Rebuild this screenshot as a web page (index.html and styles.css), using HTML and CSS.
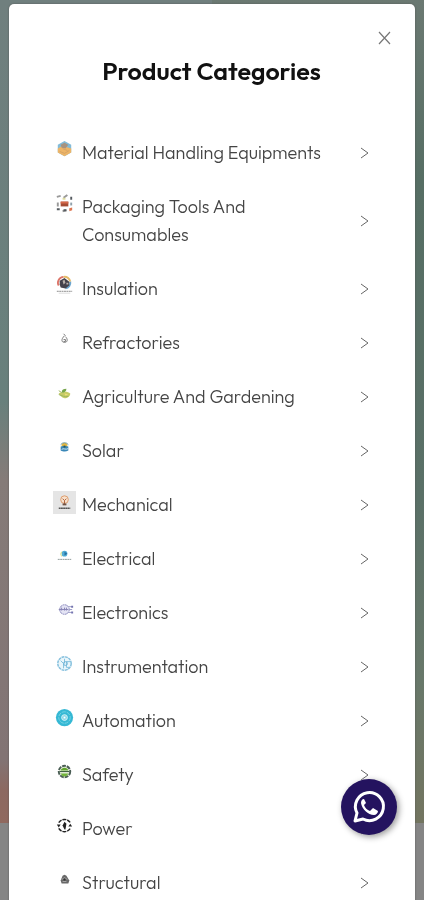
FILE: index.html
```html
<!DOCTYPE html>
<html lang="en">
<head>
    <meta charset="UTF-8">
    <meta name="viewport" content="width=device-width, initial-scale=1.0">
    <title>Product Categories</title>
    <link rel="stylesheet" href="styles.css">
</head>
<body>

<!-- page banner behind the modal -->
<div class="backdrop"></div>

<svg width="0" height="0" class="symbols" aria-hidden="true">
    <symbol id="chevron" viewBox="0 0 10 14">
        <path d="M1 2l7 5-7 5" fill="none" stroke="#666" stroke-width="1"/>
    </symbol>
</svg>

<main class="modal">
    <div class="modal-top">
        <button type="button" class="close" aria-label="Close">
            <svg width="14" height="14" viewBox="0 0 14 14"><path d="M1 1l11 12M12 1L1 13" fill="none" stroke="#777" stroke-width="1.2"/></svg>
        </button>
    </div>
    <h1>Product Categories</h1>

    <nav class="categories">
        <a href="#material-handling">
            <svg class="icon" viewBox="0 0 24 24">
                <path d="M12 2l7 4v8l-7 4-7-4V6z" fill="#82bbd8"/>
                <path d="M5 10l5-3 9 3v4l-7 4-7-4z" fill="#edb568"/>
                <path d="M8 6l4-2 4 2-3 4-4-1z" fill="#a69380"/>
                <path d="M7 13l5 2 5-3M10 10l5 2" fill="none" stroke="#d5a264"/>
            </svg>
            <span class="label">Material Handling Equipments</span>
            <svg class="chevron"><use href="#chevron"/></svg>
        </a>
        <a href="#packaging">
            <svg class="icon" viewBox="0 0 24 24">
                <path d="M8 9h8v5H8z" fill="#a64c34"/>
                <path d="M8 9h8v2H8z" fill="#d6674a"/>
                <path d="M4 4l4-1M11 5l4-3M5 10v4M10 19l4-1" fill="none" stroke="#999" stroke-width="2"/>
                <path d="M18 4h2v3h-2zM4 16h3v2H4zM11 17h3v2h-3z" fill="#555b60"/>
                <path d="M18 10h2v3h-2z" fill="#8fa0ab"/>
                <path d="M17 16l3-1v3l-3 1z" fill="#db744f"/>
                <path d="M10 5h3v2h-3z" fill="#dedb9d"/>
            </svg>
            <span class="label">Packaging Tools And Consumables</span>
            <svg class="chevron"><use href="#chevron"/></svg>
        </a>
        <a href="#insulation">
            <svg class="icon" viewBox="0 0 24 24">
                <path d="M6 11a6 6 0 0 1 5-9" fill="none" stroke="#dd7569" stroke-width="2"/>
                <path d="M11 2a6 6 0 0 1 7 5" fill="none" stroke="#e5bb68" stroke-width="2"/>
                <path d="M18 7a6 6 0 0 1-5 7" fill="none" stroke="#6ca6cf" stroke-width="2"/>
                <path d="M7 6l5-3 5 4v4l-4 3-5-1-1-3z" fill="#45424c"/>
                <path d="M10 6l2-1 1 3-2 2zM14 8h2v2h-2z" fill="#b9b1ac"/>
                <path d="M4 17h16" stroke="#888" stroke-dasharray="2 .5"/>
                <path d="M6 19h12" stroke="#ddd"/>
            </svg>
            <span class="label">Insulation</span>
            <svg class="chevron"><use href="#chevron"/></svg>
        </a>
        <a href="#refractories">
            <svg class="icon" viewBox="0 0 24 24">
                <path d="M11 5l2 2M12 7c-4 4-3 7 0 7s4-3 1-6M11 11h2v2h-2" fill="none" stroke="#777"/>
            </svg>
            <span class="label">Refractories</span>
            <svg class="chevron"><use href="#chevron"/></svg>
        </a>
        <a href="#agriculture">
            <svg class="icon" viewBox="0 0 24 24">
                <path d="M6 11c3-2 9-3 12 0 0 3-3 5-6 5-3-1-5-3-6-5z" fill="#c6cb67"/>
                <path d="M9 10c0-3 2-4 5-4 0 3-2 4-5 4z" fill="#76a54b"/>
                <path d="M6 8l3 2M6 12c3 1 6 3 10 2" fill="none" stroke="#9db55f"/>
                <path d="M12 11l4 1-3 1z" fill="#f0df79"/>
            </svg>
            <span class="label">Agriculture And Gardening</span>
            <svg class="chevron"><use href="#chevron"/></svg>
        </a>
        <a href="#solar">
            <svg class="icon" viewBox="0 0 24 24">
                <circle cx="12" cy="9" r="3" fill="#e5b73f"/>
                <path d="M8 8a5 5 0 0 1 8 0" fill="none" stroke="#6694a0"/>
                <path d="M8 10l4-1 4 1v4c-3 2-6 1-8 0z" fill="#3987b7"/>
                <path d="M9 13c2-2 4 1 7-1" fill="none" stroke="#d5e6ed"/>
                <path d="M11 9h2v2h-2z" fill="#315a50"/>
            </svg>
            <span class="label">Solar</span>
            <svg class="chevron"><use href="#chevron"/></svg>
        </a>
        <a href="#mechanical">
            <svg class="icon" viewBox="0 0 24 24">
                <path d="M0 0h24v24H0z" fill="#e5e5e5"/>
                <circle cx="12" cy="9" r="4" fill="#f7e1cd" stroke="#dc9b6b"/>
                <path d="M10 8l2 2 2-2M12 10v4" fill="none" stroke="#aa603b"/>
                <path d="M10 13h4v2h-4z" fill="#705447"/>
                <path d="M6 18h12" stroke="#555" stroke-width="1.5" stroke-dasharray="2 .3"/>
            </svg>
            <span class="label">Mechanical</span>
            <svg class="chevron"><use href="#chevron"/></svg>
        </a>
        <a href="#electrical">
            <svg class="icon" viewBox="0 0 24 24">
                <circle cx="12" cy="9" r="3" fill="#51acd4"/>
                <path d="M9 7a4 4 0 0 0 0 5" fill="none" stroke="#d9df7c"/>
                <path d="M12 7l3 2-3 2z" fill="#246da0"/>
                <path d="M5 15h14" stroke="#8d9999" stroke-dasharray="2 .5"/>
            </svg>
            <span class="label">Electrical</span>
            <svg class="chevron"><use href="#chevron"/></svg>
        </a>
        <a href="#electronics">
            <svg class="icon" viewBox="0 0 24 24">
                <circle cx="12" cy="11" r="5" fill="#e4e4f4" stroke="#8483b9" stroke-dasharray="2 .6"/>
                <path d="M6 11h10M9 9v3M12 9v3M14 9v3" fill="none" stroke="#8581b3"/>
                <path d="M16 8h4M17 11h3M16 14h4" stroke="#9a9ac3"/>
                <path d="M19 7h2v2h-2zM19 13h2v2h-2z" fill="#7474b0"/>
            </svg>
            <span class="label">Electronics</span>
            <svg class="chevron"><use href="#chevron"/></svg>
        </a>
        <a href="#instrumentation">
            <svg class="icon" viewBox="0 0 24 24">
                <circle cx="12" cy="11" r="7" fill="#eaf6fb" stroke="#83bfdd" stroke-width="1.5" stroke-dasharray="3 .7"/>
                <path d="M8 8l3 3v5M12 6v5M14 9h4M14 9v6h3" fill="none" stroke="#83bfdd"/>
                <circle cx="13" cy="11" r="2" fill="none" stroke="#70b4d6"/>
            </svg>
            <span class="label">Instrumentation</span>
            <svg class="chevron"><use href="#chevron"/></svg>
        </a>
        <a href="#automation">
            <svg class="icon" viewBox="0 0 24 24">
                <circle cx="12" cy="11" r="9" fill="#35b8d4"/>
                <circle cx="12" cy="11" r="6" fill="none" stroke="#75d3e4" stroke-dasharray="4 1"/>
                <circle cx="12" cy="11" r="3" fill="#83d4e5" stroke="#d6f4f8"/>
                <path d="M11 10h2v2h-2z" fill="#fff"/>
            </svg>
            <span class="label">Automation</span>
            <svg class="chevron"><use href="#chevron"/></svg>
        </a>
        <a href="#safety">
            <svg class="icon" viewBox="0 0 24 24">
                <circle cx="12" cy="11" r="6" fill="#e5edda" stroke="#4b5e55" stroke-width="2" stroke-dasharray="4 1"/>
                <path d="M8 10c1-4 7-4 8 0z" fill="#61a52b"/>
                <path d="M7 11h10" stroke="#345534"/>
                <path d="M8 13h8l-2 3h-4z" fill="#72b33a"/>
            </svg>
            <span class="label">Safety</span>
            <svg class="chevron"><use href="#chevron"/></svg>
        </a>
        <a href="#power">
            <svg class="icon" viewBox="0 0 24 24">
                <path d="M6 8a7 7 0 0 1 12 0M6 14a7 7 0 0 0 12 0" fill="none" stroke="#222" stroke-width="1.5" stroke-dasharray="4 1"/>
                <path d="M4 10h4l-2 3zM16 12h4l-2-3z" fill="#222"/>
                <path d="M12 7l2 2-1 6h-1l-2-4z" fill="#222"/>
            </svg>
            <span class="label">Power</span>
            <svg class="chevron"><use href="#chevron"/></svg>
        </a>
        <a href="#structural">
            <svg class="icon" viewBox="0 0 24 24">
                <path d="M10 7l2-1 2 1 3 5-1 3H9l-1-3z" fill="#686868"/>
                <path d="M9 11l3-2 3 2M10 13h4" fill="none" stroke="#aaa"/>
                <path d="M11 10h2v2h-2z" fill="#333"/>
            </svg>
            <span class="label">Structural</span>
            <svg class="chevron"><use href="#chevron"/></svg>
        </a>
    </nav>
</main>

<a class="whatsapp" href="#whatsapp" aria-label="Chat on WhatsApp">
    <svg width="34" height="34" viewBox="0 0 34 34">
        <path d="M3 31l2-8a14 14 0 1 1 6 6z" fill="none" stroke="#fff" stroke-width="3" stroke-linejoin="round"/>
        <path d="M12 9c-2 0-3 2-3 4 1 6 7 12 13 12 2 0 4-2 4-4l-5-3-3 3c-3-1-5-3-6-6l2-2-2-4z" fill="#fff"/>
    </svg>
</a>

</body>
</html>
```

FILE: styles.css
```css
* {
    box-sizing: border-box;
}
body {
    margin: 0;
    height: 100vh;
    overflow: hidden;
    font-family: Outfit, Lato, sans-serif;
    color: #444;
    background-color: #858585;
}
.backdrop {
    position: fixed;
    top: 0;
    left: 0;
    width: 100%;
    height: 823px;
    background:
        linear-gradient(#707f7e, #68807c 400px, #857b78 480px, #827474 760px, #8c6961 790px, #90695f) left / 50% 100% no-repeat,
        linear-gradient(#6b7972, #566e64 180px, #5a7067 500px, #68786a 680px, #737560) right / 50% 100% no-repeat;
}
.symbols {
    position: absolute;
}
.modal {
    position: relative;
    min-height: 100vh;
    margin: 4px 9px 0;
    padding: 24px 45px 24px 44px;
    background-color: #fff;
    border-radius: 5px 5px 0 0;
    box-shadow: 0 0 2px #555;
}
.modal-top {
    display: flex;
    justify-content: flex-end;
    margin-right: -25px;
}
.close {
    display: flex;
    padding: 3px;
    border: none;
    background: none;
    cursor: pointer;
}
h1 {
    margin: 7px 0 52px;
    font-size: 25px;
    line-height: 32px;
    font-weight: 600;
    text-align: center;
    color: #111;
}
.categories {
    display: flex;
    flex-direction: column;
    gap: 26px;
}
.categories a {
    display: flex;
    align-items: flex-start;
    gap: 6px;
    font-size: 18px;
    line-height: 28px;
    font-weight: 300;
    color: #444;
    text-decoration: none;
}
.icon {
    flex: none;
    width: 23px;
    height: 23px;
}
.label {
    flex: 1;
    padding-right: 28px;
}
.chevron {
    flex: none;
    align-self: center;
    width: 10px;
    height: 14px;
}
.whatsapp {
    position: fixed;
    right: 27px;
    bottom: 65px;
    display: flex;
    align-items: center;
    justify-content: center;
    width: 56px;
    height: 56px;
    border-radius: 50%;
    background-color: #24135f;
    box-shadow: 2px 2px 6px #999;
}
```
